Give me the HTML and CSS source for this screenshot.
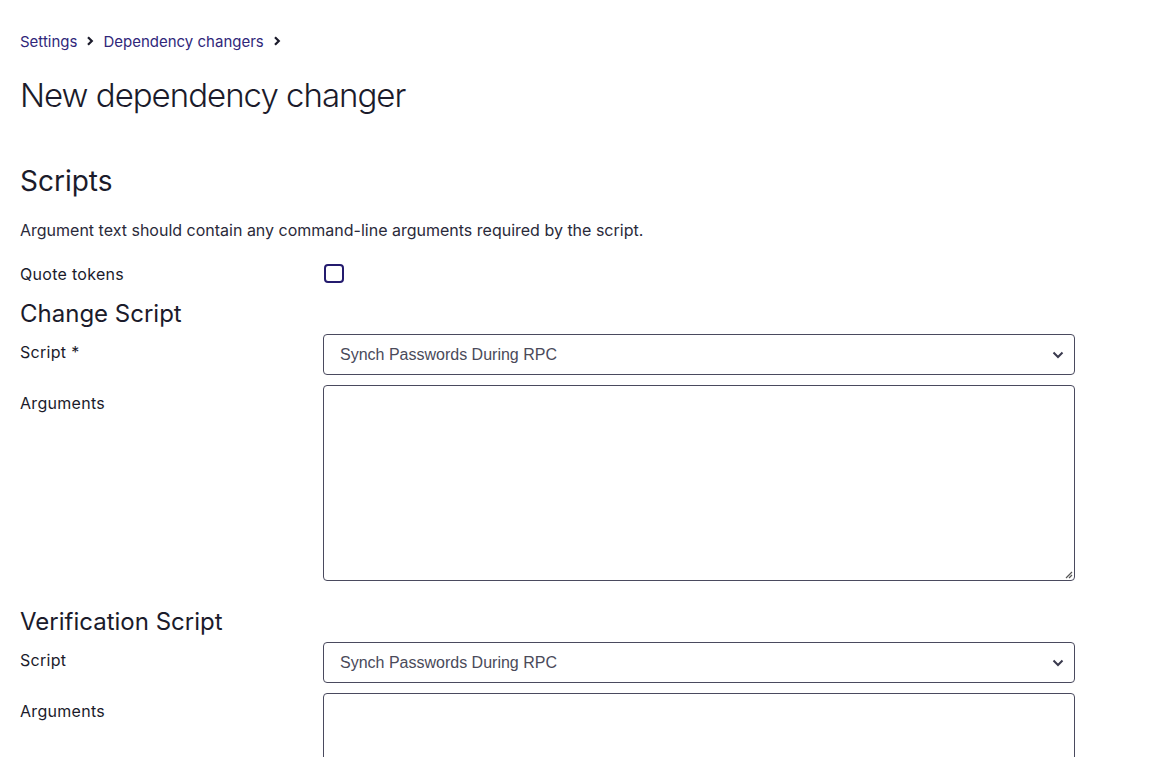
FILE: index.html
```html
<!DOCTYPE html>
<html lang="en">
<head>
    <meta charset="UTF-8">
    <meta name="viewport" content="width=device-width, initial-scale=1.0">
    <title>New dependency changer</title>
    <link rel="stylesheet" href="styles.css">
</head>
<body>
    <div class="page">
        <!-- breadcrumb -->
        <nav class="breadcrumb">
            <a href="#">Settings</a>
            <svg class="crumb-sep" width="10" height="10" viewBox="0 0 10 10"><path d="M3 1.2 L6.8 5 L3 8.8" fill="none" stroke="#1b1b2b" stroke-width="2.2"/></svg>
            <a href="#">Dependency changers</a>
            <svg class="crumb-sep" width="10" height="10" viewBox="0 0 10 10"><path d="M3 1.2 L6.8 5 L3 8.8" fill="none" stroke="#1b1b2b" stroke-width="2.2"/></svg>
        </nav>

        <h1 class="page-title">New dependency changer</h1>

        <h2 class="section-title">Scripts</h2>
        <p class="hint">Argument text should contain any command-line arguments required by the script.</p>

        <div class="row row-check">
            <label class="label">Quote tokens</label>
            <span class="checkbox"></span>
        </div>

        <h3 class="group-title">Change Script</h3>
        <div class="row">
            <label class="label">Script *</label>
            <div class="select">
                <span>Synch Passwords During RPC</span>
                <svg width="12" height="8" viewBox="0 0 12 8"><path d="M1.5 1.5 L6 6 L10.5 1.5" fill="none" stroke="#3a3a4e" stroke-width="2"/></svg>
            </div>
        </div>
        <div class="row">
            <label class="label">Arguments</label>
            <div class="textarea">
                <svg class="grip" width="10" height="10" viewBox="0 0 10 10"><path d="M9 3 L3 9 M9 6 L6 9" stroke="#555" stroke-width="1.2"/></svg>
            </div>
        </div>

        <h3 class="group-title group-title-2">Verification Script</h3>
        <div class="row">
            <label class="label">Script</label>
            <div class="select">
                <span>Synch Passwords During RPC</span>
                <svg width="12" height="8" viewBox="0 0 12 8"><path d="M1.5 1.5 L6 6 L10.5 1.5" fill="none" stroke="#3a3a4e" stroke-width="2"/></svg>
            </div>
        </div>
        <div class="row">
            <label class="label">Arguments</label>
            <div class="textarea"></div>
        </div>
    </div>
</body>
</html>
```

FILE: styles.css
```css
html, body {
    margin: 0;
    padding: 0;
    background: #fff;
    overflow: hidden;
}

body {
    font-family: Inter, "Noto Sans", sans-serif;
    color: #1b1b2b;
    height: 757px;
}

.page {
    padding: 31px 0 0 20px;
    width: 1055px;
}

.breadcrumb {
    display: flex;
    align-items: center;
    gap: 8px;
    font-size: 15px;
    height: 20px;
}

.breadcrumb a {
    color: #30277a;
    text-decoration: none;
}

.page-title {
    font-size: 33px;
    font-weight: 300;
    letter-spacing: -1px;
    margin: 22px 0 0;
    line-height: 44px;
    color: #1b1b2b;
}

.section-title {
    font-size: 28px;
    font-weight: 400;
    margin: 46px 0 0;
    line-height: 36px;
}

.hint {
    font-size: 16px;
    color: #2a2a3a;
    margin: 21px 0 0;
    line-height: 20px;
}

.row {
    display: flex;
    margin-top: 10px;
}

.label {
    width: 303px;
    flex: none;
    font-size: 16px;
    letter-spacing: 0.3px;
    padding-top: 8px;
    line-height: 20px;
}

.row-check {
    margin-top: 24px;
    align-items: flex-start;
}

.row-check .label {
    padding-top: 0;
}

.checkbox {
    width: 16px;
    height: 15px;
    border: 2px solid #241b6e;
    border-radius: 4px;
    margin-left: 1px;
}

.group-title {
    font-size: 24px;
    font-weight: 400;
    margin: 15px 0 0;
    line-height: 30px;
}

.group-title-2 {
    margin-top: 26px;
}

.group-title + .row {
    margin-top: 5px;
}

.select {
    flex: 1;
    height: 39px;
    border: 1px solid #4a4a5e;
    border-radius: 4px;
    display: flex;
    align-items: center;
    justify-content: space-between;
    padding: 0 10px 0 16px;
    font-family: "Liberation Sans", Arial, sans-serif;
    font-size: 16px;
    color: #4a4a5a;
}

.textarea {
    flex: 1;
    height: 194px;
    border: 1px solid #4a4a5e;
    border-radius: 4px;
    position: relative;
}

.grip {
    position: absolute;
    right: 1px;
    bottom: 1px;
}
```
